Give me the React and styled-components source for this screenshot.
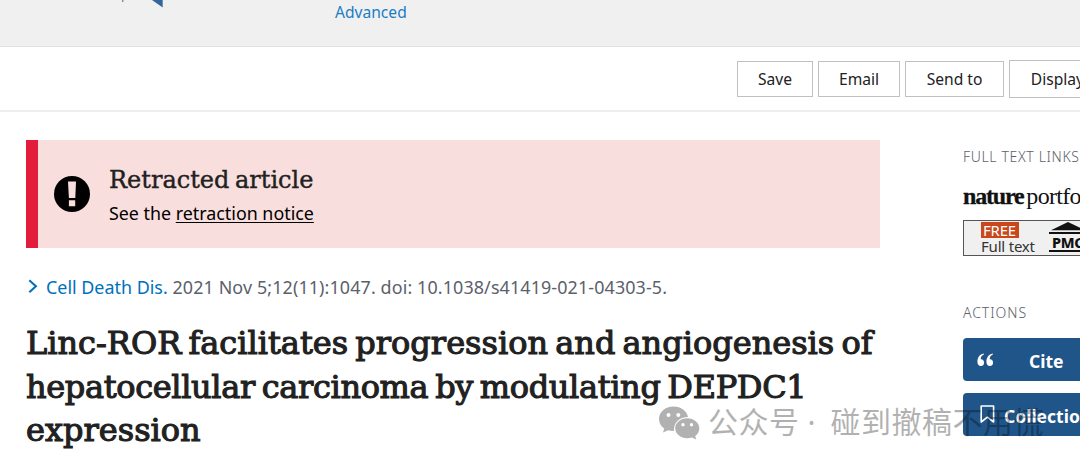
import React from "react";
import styled, { createGlobalStyle } from "styled-components";

const GlobalStyle = createGlobalStyle`
    * {
        box-sizing: border-box;
    }
    body {
        margin: 0;
        background-color: #ffffff;
        font-family: "Noto Sans", "Open Sans", sans-serif;
        color: #212121;
        overflow: hidden;
    }
    h1, h2, h3, p {
        margin: 0;
    }
    svg {
        display: block;
        flex-shrink: 0;
    }
`

const Page = styled.div`
    position: relative;
    width: 1080px;
    height: 467px;
    overflow: hidden;
`

const SearchHeader = styled.header`
    display: flex;
    align-items: flex-start;
    height: 47px;
    padding-left: 120px;
    background-color: #f0f0f0;
    border-bottom: 1px solid #e0e0e0;
`

const AdvancedLink = styled.a`
    margin-left: 171px;
    font-size: 15.6px;
    line-height: 24px;
    color: #1a7dc4;
`

const Toolbar = styled.div`
    display: flex;
    align-items: center;
    gap: 5px;
    height: 65px;
    padding-left: 737px;
    border-bottom: 2px solid #eeeeee;
`

const ToolbarButton = styled.button`
    flex-shrink: 0;
    width: ${(props) => props.$width}px;
    height: ${(props) => props.$height || 36}px;
    padding: 0;
    background-color: #ffffff;
    border: 1px solid #bfc0c4;
    font-family: inherit;
    font-size: 15.6px;
    color: #212121;
    white-space: nowrap;
`

const Content = styled.div`
    display: flex;
    padding: 28px 0 0 26px;
`

const Main = styled.main`
    width: 854px;
    flex-shrink: 0;
`

const Alert = styled.section`
    display: flex;
    align-items: center;
    height: 108px;
    padding-left: 16px;
    background-color: #f9dede;
    border-left: 12px solid #e31c3d;
`

const AlertBody = styled.div`
    margin: 1px 0 0 19px;
`

const AlertTitle = styled.h3`
    font-family: "DejaVu Serif", serif;
    font-size: 24px;
    font-weight: 400;
    line-height: 36px;
    word-spacing: -2px;
    -webkit-text-stroke: 0.4px #212121;
    white-space: nowrap;
`

const AlertText = styled.p`
    font-size: 17.85px;
    line-height: 30px;
    color: #000000;
    a {
        text-decoration: underline;
        text-decoration-thickness: 1px;
        text-underline-offset: 2px;
    }
`

const Citation = styled.div`
    display: flex;
    align-items: center;
    height: 30px;
    margin-top: 24px;
    font-size: 17.9px;
    color: #5b616b;
    white-space: pre;
    a {
        margin-left: 6px;
        color: #0071bc;
    }
    span {
        letter-spacing: 0.12px;
    }
`

const Title = styled.h1`
    margin-top: 20px;
    font-family: "DejaVu Serif", serif;
    font-size: 32px;
    font-weight: 400;
    line-height: 43.5px;
    word-spacing: -3px;
    -webkit-text-stroke: 1.1px #212121;
`

const TitleLine = styled.span`
    display: block;
    white-space: nowrap;
    letter-spacing: ${(props) => props.$spacing || 0}px;
`

const Sidebar = styled.aside`
    width: 200px;
    flex-shrink: 0;
    margin-left: 83px;
    padding-top: 7px;
`

const SideHeading = styled.h2`
    font-size: 14px;
    font-weight: 300;
    line-height: 20px;
    letter-spacing: ${(props) => props.$spacing}px;
    color: #5b616b;
    white-space: nowrap;
`

const PublisherLogo = styled.div`
    display: flex;
    align-items: baseline;
    height: 30px;
    margin-top: 14px;
    font-family: "Liberation Serif", serif;
    font-size: 24px;
    line-height: 30px;
    letter-spacing: -0.7px;
    color: #111111;
    b {
        margin-right: 3px;
        letter-spacing: -1.2px;
        -webkit-text-stroke: 0.3px #111111;
    }
`

const PmcBadge = styled.div`
    display: flex;
    height: 36px;
    margin-top: 9px;
    background-color: #f0f0f0;
    border: 1px solid #555555;
`

const FreeText = styled.div`
    width: 57px;
    margin: 1px 0 0 17px;
    font-size: 15px;
    line-height: 16px;
    letter-spacing: -0.2px;
    color: #333333;
    white-space: nowrap;
`

const FreeLabel = styled.div`
    width: 38px;
    height: 16px;
    padding-left: 2px;
    background-color: #c8471b;
    color: #ffffff;
    font-size: 14.8px;
    line-height: 16px;
    letter-spacing: -0.1px;
`

const PmcMark = styled.div`
    width: 38px;
    margin-left: 11px;
    padding-top: 1px;
`

const PmcName = styled.div`
    height: 17px;
    padding-left: 3px;
    border-bottom: 2px solid #111111;
    font-size: 14.5px;
    font-weight: 800;
    line-height: 14px;
    letter-spacing: -0.3px;
    color: #111111;
`

const Actions = styled.div`
    margin-top: 47px;
`

const Buttons = styled.div`
    display: flex;
    flex-direction: column;
    gap: 12px;
    margin-top: 15px;
`

const ActionButton = styled.button`
    display: flex;
    align-items: center;
    height: 43px;
    padding: 0 0 0 ${(props) => props.$left}px;
    gap: ${(props) => props.$gap}px;
    background-color: #20558a;
    border: 0;
    border-radius: 4px;
    font-family: inherit;
    font-size: 17.5px;
    font-weight: 700;
    line-height: 24px;
    color: #ffffff;
    white-space: nowrap;
    span {
        padding-top: 3px;
    }
`

const Watermark = styled.div`
    position: absolute;
    left: 658px;
    top: 400px;
    display: flex;
    align-items: center;
    height: 40px;
    font-family: "Noto Sans CJK SC", sans-serif;
    font-size: 30px;
    line-height: 40px;
    color: #000000;
    opacity: 0.3;
    white-space: nowrap;
    pointer-events: none;
    svg {
        margin-top: 5px;
    }
`

const WatermarkText = styled.span`
    margin-left: ${(props) => props.$left}px;
    letter-spacing: ${(props) => props.$spacing || 0}px;
`

const WatermarkDot = styled.span`
    margin: 5px 0 0 8px;
    font-family: "Noto Sans", sans-serif;
`

const LogoTip = () => (
    <svg width="44" height="10" viewBox="0 0 44 10">
        <path d="M2 0H3.5V2H2Z" fill="#8a8f99" />
        <path d="M32 0H42.7V7.6Z" fill="#336699" />
    </svg>
)

const AlertIcon = () => (
    <svg width="36" height="36" viewBox="0 0 36 36">
        <circle cx="18" cy="18" r="18" fill="#000000" />
        <path d="M14 5.5H22L21.3 22H14.9ZM14.9 24.3H21.2V30.3H14.9Z" fill="#f9dede" />
    </svg>
)

const Chevron = () => (
    <svg width="14" height="16" viewBox="0 0 14 16">
        <path d="M3.3 1.2L9.9 7.2L3.3 13.2" fill="none" stroke="#0071bc" strokeWidth="2.1" />
    </svg>
)

const PmcRoof = () => (
    <svg width="38" height="13" viewBox="0 0 38 13">
        <path d="M2 8.2L19 0L36 8.2Z" fill="#111111" />
        <path d="M0 10H38V12H0Z" fill="#111111" />
    </svg>
)

const QuoteIcon = () => (
    <svg width="18" height="14" viewBox="0 0 18 14">
        <g fill="#ffffff">
            <path d="M6.7 0.4L6.9 1.6C4.9 2.4 3.7 3.9 3.7 6.2C5.7 6 7.1 7.4 7.1 9.4C7.1 11.6 5.7 13 3.8 13C1.6 13 0.4 11.3 0.4 8.5C0.4 4.5 2.8 1.2 6.7 0.4Z" />
            <path d="M15.7 0.4L15.9 1.6C13.9 2.4 12.7 3.9 12.7 6.2C14.7 6 16.1 7.4 16.1 9.4C16.1 11.6 14.7 13 12.8 13C10.6 13 9.4 11.3 9.4 8.5C9.4 4.5 11.8 1.2 15.7 0.4Z" />
        </g>
    </svg>
)

const BookmarkIcon = () => (
    <svg width="15" height="19" viewBox="0 0 15 19">
        <path d="M1.2 1H13.6V17L7.4 12.2L1.2 17Z" fill="none" stroke="#ffffff" strokeWidth="1.6" strokeLinejoin="round" />
    </svg>
)

const WechatIcon = () => (
    <svg width="42" height="34" viewBox="0 0 42 34">
        <path fillRule="evenodd" d="M15.5 0.5C7.3 0.5 1 6 1 13C1 17 3 20.2 6.3 22.6L5 26.5L10 24.3C11.7 24.8 13.7 25.1 16 25.1C15.2 17 21.5 11 30 11C28.8 5 23 0.5 15.5 0.5ZM10.5 6.9A2 2 0 1 0 10.5 10.9A2 2 0 1 0 10.5 6.9ZM20.3 6.9A2 2 0 1 0 20.3 10.9A2 2 0 1 0 20.3 6.9Z" />
        <path fillRule="evenodd" d="M29.2 12.2C22.6 12.2 17.2 16.7 17.2 22.2C17.2 27.8 22.6 32.2 29.2 32.2C31 32.2 32.5 31.9 34 31.4L38.2 33.4L37.2 30C39.8 28.1 41.3 25.4 41.3 22.2C41.3 16.7 35.9 12.2 29.2 12.2ZM25 17.1A1.7 1.7 0 1 0 25 20.5A1.7 1.7 0 1 0 25 17.1ZM33.5 17.1A1.7 1.7 0 1 0 33.5 20.5A1.7 1.7 0 1 0 33.5 17.1Z" />
    </svg>
)

const App = () => {
    return (
        <Page>
            <GlobalStyle />
            <SearchHeader>
                <LogoTip />
                <AdvancedLink>Advanced</AdvancedLink>
            </SearchHeader>
            <Toolbar>
                <ToolbarButton $width={76}>Save</ToolbarButton>
                <ToolbarButton $width={82}>Email</ToolbarButton>
                <ToolbarButton $width={99}>Send to</ToolbarButton>
                <ToolbarButton $width={156} $height={38}>Display options</ToolbarButton>
            </Toolbar>
            <Content>
                <Main>
                    <Alert>
                        <AlertIcon />
                        <AlertBody>
                            <AlertTitle>Retracted article</AlertTitle>
                            <AlertText>See the <a>retraction notice</a></AlertText>
                        </AlertBody>
                    </Alert>
                    <Citation>
                        <Chevron />
                        <a>Cell Death Dis.</a>
                        <span> 2021 Nov 5;12(11):1047. doi: 10.1038/s41419-021-04303-5.</span>
                    </Citation>
                    <Title>
                        <TitleLine>Linc-ROR facilitates progression and angiogenesis of</TitleLine>
                        <TitleLine $spacing={-0.35}>hepatocellular carcinoma by modulating DEPDC1</TitleLine>
                        <TitleLine>expression</TitleLine>
                    </Title>
                </Main>
                <Sidebar>
                    <SideHeading $spacing={0.65}>FULL TEXT LINKS</SideHeading>
                    <PublisherLogo><b>nature</b>portfolio</PublisherLogo>
                    <PmcBadge>
                        <FreeText>
                            <FreeLabel>FREE</FreeLabel>
                            Full text
                        </FreeText>
                        <PmcMark>
                            <PmcRoof />
                            <PmcName>PMC</PmcName>
                        </PmcMark>
                    </PmcBadge>
                    <Actions>
                        <SideHeading $spacing={0.95}>ACTIONS</SideHeading>
                        <Buttons>
                            <ActionButton $left={14} $gap={34}><QuoteIcon /><span>Cite</span></ActionButton>
                            <ActionButton $left={17} $gap={9}><BookmarkIcon /><span>Collections</span></ActionButton>
                        </Buttons>
                    </Actions>
                </Sidebar>
            </Content>
            <Watermark>
                <WechatIcon />
                <WatermarkText $left={8} $spacing={0.5}>公众号</WatermarkText>
                <WatermarkDot>·</WatermarkDot>
                <WatermarkText $left={15} $spacing={0.5}>碰到撤稿不用慌</WatermarkText>
            </Watermark>
        </Page>
    )
}

export default App;
